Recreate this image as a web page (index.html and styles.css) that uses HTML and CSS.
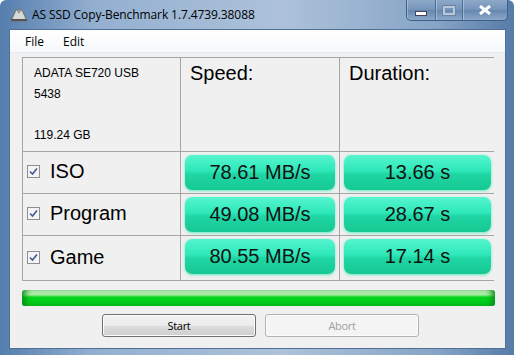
FILE: index.html
```html
<!DOCTYPE html>
<html lang="en">
<head>
    <meta charset="UTF-8">
    <title>AS SSD Copy-Benchmark</title>
    <link rel="stylesheet" href="styles.css">
</head>
<body>
    <div class="window">
        <div class="titlebar">
            <svg class="app-icon" width="18" height="14" viewBox="0 0 18 14">
                <polygon points="1,13 6,2 12,2 17,13" fill="#d8d8d8" stroke="#707070" stroke-width="1"/>
                <polygon points="6,2 9,6 12,2" fill="#9a9a9a"/>
                <rect x="1" y="11" width="16" height="2" fill="#555"/>
            </svg>
            <span class="title">AS SSD Copy-Benchmark 1.7.4739.38088</span>
            <div class="controls">
                <div class="ctl ctl-min"><span class="bar"></span></div>
                <div class="ctl ctl-max"><span class="box"></span></div>
                <div class="ctl ctl-close">
                    <svg width="14" height="10" viewBox="0 0 14 10">
                        <path d="M2 1 L12 9 M12 1 L2 9" stroke="#fff" stroke-width="3"/>
                    </svg>
                </div>
            </div>
        </div>
        <div class="client">
            <div class="menubar">
                <span>File</span>
                <span>Edit</span>
            </div>
            <div class="content">
                <div class="grid">
                    <div class="cell info">
                        <div>ADATA SE720 USB</div>
                        <div>5438</div>
                        <div class="size">119.24 GB</div>
                    </div>
                    <div class="cell head">Speed:</div>
                    <div class="cell head">Duration:</div>

                    <div class="cell label"><span class="check"></span>ISO</div>
                    <div class="cell val"><div class="pill">78.61 MB/s</div></div>
                    <div class="cell val dur"><div class="pill">13.66 s</div></div>

                    <div class="cell label"><span class="check"></span>Program</div>
                    <div class="cell val"><div class="pill">49.08 MB/s</div></div>
                    <div class="cell val dur"><div class="pill">28.67 s</div></div>

                    <div class="cell label"><span class="check"></span>Game</div>
                    <div class="cell val"><div class="pill">80.55 MB/s</div></div>
                    <div class="cell val dur"><div class="pill">17.14 s</div></div>
                </div>
                <div class="progress"></div>
                <div class="buttons">
                    <button class="btn">Start</button>
                    <button class="btn" disabled>Abort</button>
                </div>
            </div>
        </div>
    </div>
</body>
</html>
```

FILE: styles.css
```css
body {
    margin: 0;
    width: 514px;
    height: 355px;
    overflow: hidden;
}
.window {
    width: 514px;
    height: 355px;
    box-sizing: border-box;
    padding: 0 8px 6px 9px;
    background: linear-gradient(90deg, #557eae 0%, #93afd0 18%, #adc2da 55%, #86a4c6 85%, #567ba8 100%);
    border-radius: 6px 6px 0 0;
    display: flex;
    flex-direction: column;
}
.titlebar {
    height: 29px;
    display: flex;
    align-items: center;
    position: relative;
}
.app-icon {
    margin: 0 4px 0 1px;
}
.title {
    font-family: "Open Sans", sans-serif;
    font-size: 12px;
    color: #000;
    letter-spacing: -0.1px;
}
.controls {
    position: absolute;
    top: 0;
    right: -2px;
    display: flex;
    height: 20px;
    border: 1px solid #3f5f86;
    border-top: none;
    border-radius: 0 0 5px 5px;
    overflow: hidden;
    background: linear-gradient(#8ea9c8, #7393b9 50%, #6587ae 51%, #8aa7c8);
}
.ctl {
    height: 20px;
    display: flex;
    align-items: center;
    justify-content: center;
    border-left: 1px solid #4d6d94;
    box-shadow: inset 1px 0 0 rgba(255,255,255,0.3);
}
.ctl-min { width: 28px; border-left: none; }
.ctl-max { width: 26px; }
.ctl-close { width: 44px; }
.bar {
    width: 10px;
    height: 3px;
    margin-top: 6px;
    background: #fff;
    border: 1px solid #445;
}
.box {
    width: 8px;
    height: 5px;
    border: 2px solid #b8c8da;
    outline: 1px solid #6b84a3;
}
.client {
    flex: 1;
    display: flex;
    flex-direction: column;
    background: #f0f0f0;
    border: 1px solid #4f6f96;
}
.menubar {
    height: 22px;
    background: linear-gradient(#ffffff, #f6f8fb);
    display: flex;
    align-items: center;
    gap: 19px;
    padding-left: 15px;
    font-family: "Open Sans", sans-serif;
    font-size: 12px;
    border-bottom: 1px solid #e6eaf0;
}
.content {
    padding: 4px 10px 0 12px;
}
.grid {
    display: grid;
    grid-template-columns: 157px 158px 154px;
    grid-template-rows: 93px 41px 41px 44px;
    gap: 1px;
    padding: 1px;
    width: 472px;
    box-sizing: border-box;
    background: #a5a5a5;
}
.cell {
    background: #f0f0f0;
    font-family: "Liberation Sans", Arial, sans-serif;
}
.info {
    padding: 5px 0 0 11px;
    font-size: 12px;
    line-height: 21px;
    color: #000;
}
.info .size {
    margin-top: 20px;
}
.head {
    font-size: 20px;
    padding: 4px 0 0 9px;
}
.label {
    display: flex;
    align-items: center;
    font-size: 20px;
    padding: 0 0 2px 4px;
}
.check {
    width: 11px;
    height: 11px;
    margin-right: 10px;
    border: 1px solid #8f8f8f;
    background: #f4f4f4 url("data:image/svg+xml,%3Csvg xmlns='http://www.w3.org/2000/svg' width='11' height='11'%3E%3Cpath d='M2 5.5 L4.5 8 L9 2.5' stroke='%23405a9a' stroke-width='1.6' fill='none'/%3E%3C/svg%3E") no-repeat;
}
.val {
    padding: 3px 4px 3px 4px;
}
.dur {
    padding-right: 3px;
}
.pill {
    height: 35px;
    border-radius: 7px;
    background: linear-gradient(#56f5cf 0%, #2ee8b9 45%, #1fd6a4 55%, #17c892 100%);
    box-shadow: 0 1px 3px rgba(40, 230, 170, 0.7);
    display: flex;
    align-items: center;
    justify-content: center;
    font-size: 20px;
    color: #111;
}
.progress {
    margin-top: 9px;
    width: 473px;
    height: 16px;
    border-radius: 3px;
    background: linear-gradient(#d2f6cc 0%, #a4eca0 30%, #05d41d 45%, #00c818 100%);
    box-shadow: inset 6px 0 6px -3px #0a8a1a, inset -6px 0 6px -3px #0a8a1a;
}
.buttons {
    display: flex;
    gap: 9px;
    padding: 8px 0 0 80px;
}
.btn {
    width: 154px;
    height: 23px;
    font-family: "Open Sans", sans-serif;
    font-size: 11px;
    letter-spacing: -0.3px;
    color: #000;
    border: 1px solid #707070;
    border-radius: 3px;
    background: linear-gradient(#f2f2f2 0%, #ebebeb 50%, #dddddd 51%, #cfcfcf 100%);
    box-shadow: inset 0 0 0 1px #fcfcfc;
    padding: 0;
}
.btn:disabled {
    color: #a0a0a0;
    border-color: #adb2b5;
    background: #f4f4f4;
}
```
